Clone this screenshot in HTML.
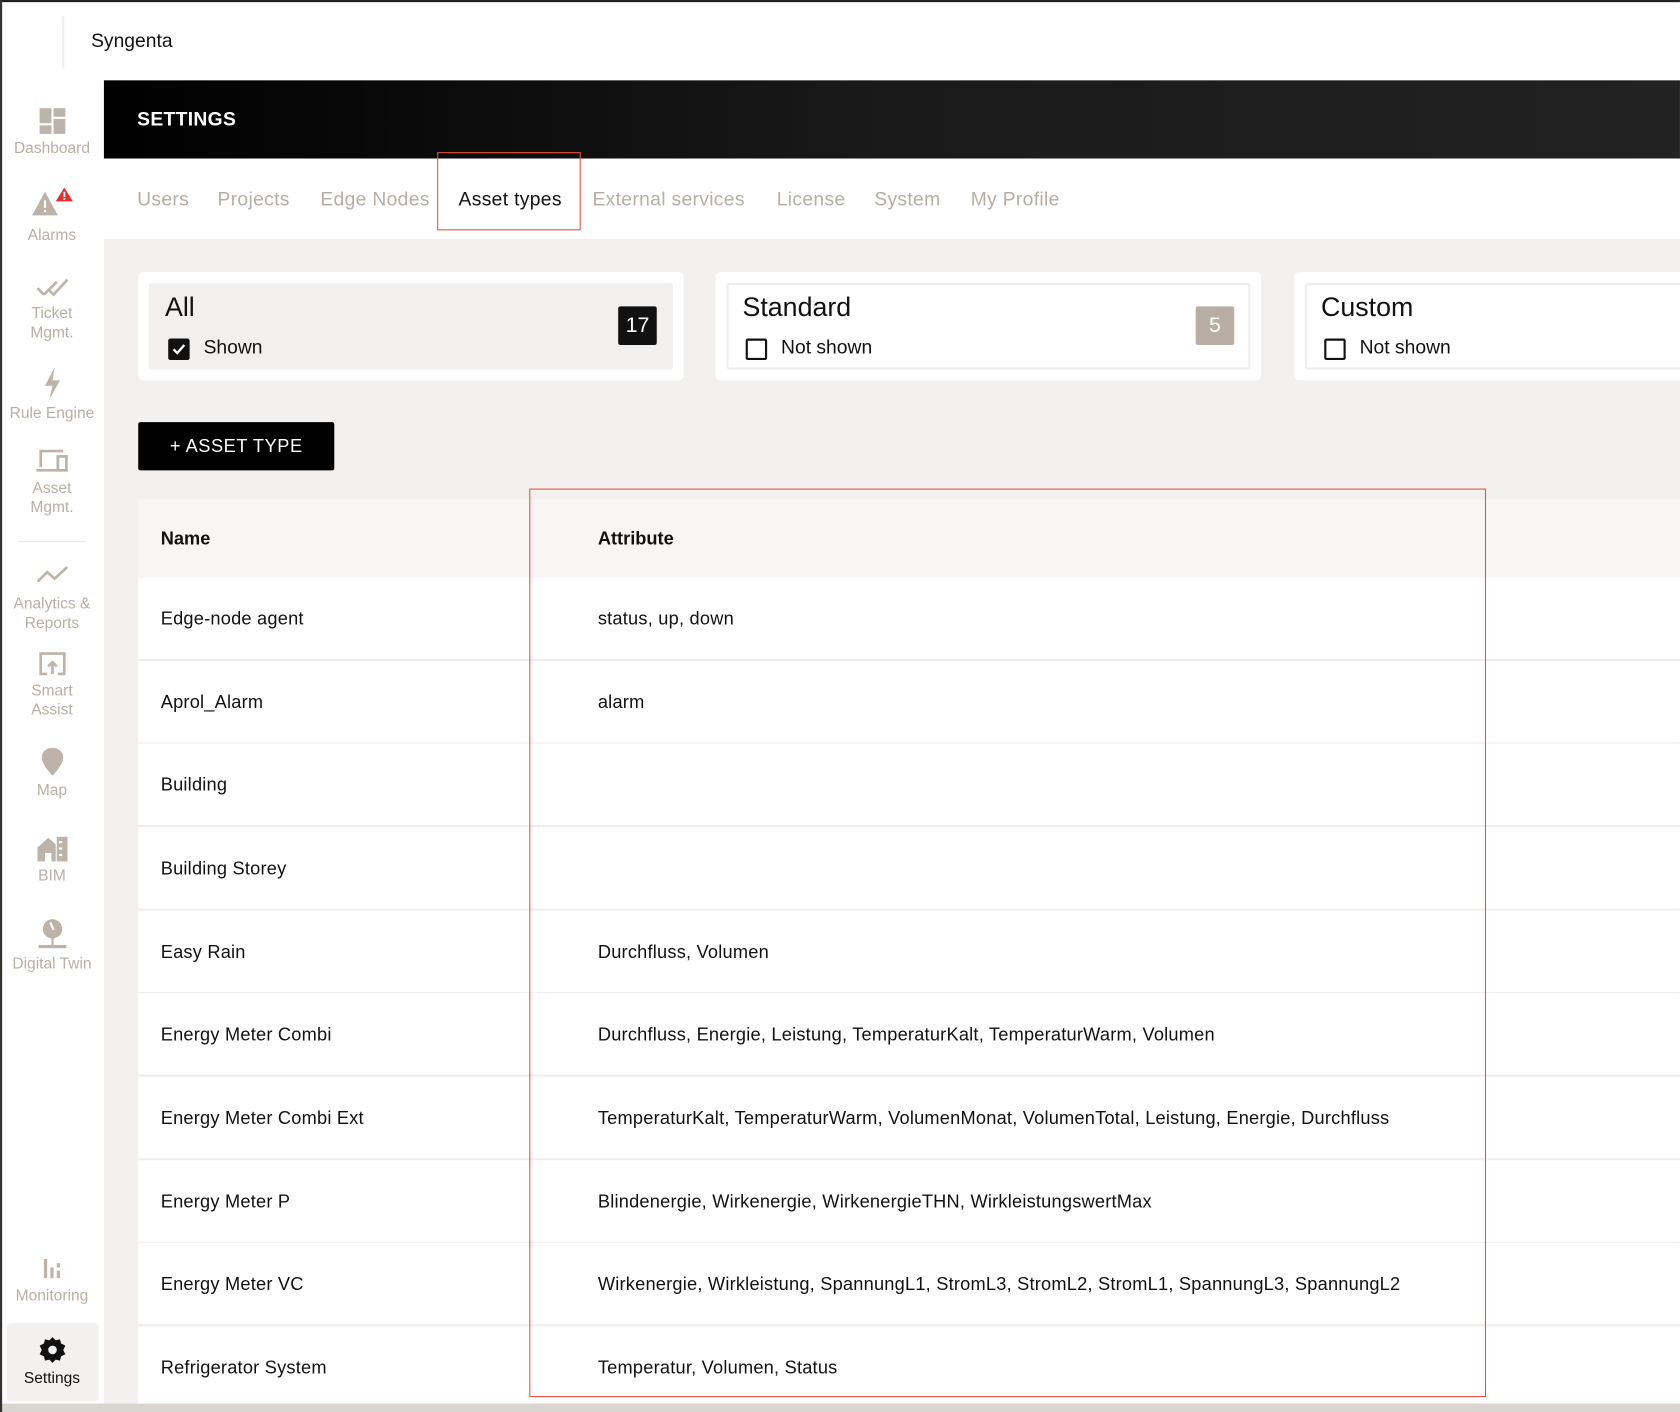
<!DOCTYPE html>
<html><head><meta charset="utf-8"><style>
*{margin:0;padding:0;box-sizing:border-box}
html,body{width:1680px;height:1412px;overflow:hidden;background:#fff;font-family:"Liberation Sans",sans-serif}
#s{position:absolute;left:0;top:0;width:1568px;height:1318px;transform:scale(1.0714);transform-origin:0 0;background:#f2f1ef}
.a{position:absolute}
.side{position:absolute;left:0;top:75px;width:97px;height:1243px;background:#fff}
.si{position:absolute;left:0;width:97px;text-align:center;color:#b9afa5;font-size:14.5px;line-height:18px}
.si svg{display:block;margin:0 auto 4px}
.tab{position:absolute;top:176px;font-size:18px;color:#b8aea5;letter-spacing:.3px}
.card{position:absolute;top:254px;width:509px;height:101px;background:#fff;border-radius:4px}
.inner{position:absolute;left:10px;top:10px;right:10px;bottom:10px;border-radius:3px}
.ttl{position:absolute;left:15px;top:9px;font-size:25px;color:#111;white-space:nowrap}
.cb{position:absolute;left:18px;top:52px;width:20px;height:20px;border:2px solid #111;border-radius:2px}
.cl{position:absolute;left:51px;top:50px;font-size:18px;color:#111;white-space:nowrap}
.badge{position:absolute;top:22px;right:15px;width:36px;height:36px;color:#fff;font-size:20px;text-align:center;line-height:36px;border-radius:2px}
.row{position:absolute;left:129px;width:1439px;height:78px;background:#fff;border-bottom:2px solid #efeeec;font-size:17px;color:#111;letter-spacing:.2px}
.row span{position:absolute;top:29px;white-space:nowrap}
.n{left:21px}.t{left:429px}
</style></head><body><div id="s">
<div class="a" style="left:0;top:0;width:1568px;height:75px;background:#fff;border-top:2px solid #222"></div>
<div class="a" style="left:0;top:0;width:2px;height:1318px;background:#333;z-index:5"></div>
<div class="a" style="left:58px;top:15px;width:2px;height:48px;background:#eee"></div>
<div class="a" style="left:85px;top:28px;font-size:18px;color:#111">Syngenta</div>
<div class="side">
<div class="si" style="top:25px"><svg width="26" height="26" viewBox="0 0 26 26" fill="#bdb3a9"><rect x="1" y="1" width="11" height="14"/><rect x="14" y="1" width="11" height="8"/><rect x="1" y="17" width="11" height="8"/><rect x="14" y="11" width="11" height="14"/></svg><div style="margin-top:4px">Dashboard</div></div>
<div class="si" style="top:100px"><svg width="40" height="28" viewBox="0 0 40 28"><path d="M13 4 L25 26 H1 Z" fill="#bdb3a9"/><rect x="12" y="12" width="2" height="7" fill="#fff"/><rect x="12" y="21" width="2" height="2" fill="#fff"/><path d="M31 0 L39 13 H23 Z" fill="#e8302a"/><rect x="30.3" y="4" width="1.6" height="5" fill="#fff"/><rect x="30.3" y="10" width="1.6" height="1.6" fill="#fff"/></svg><div style="margin-top:8px">Alarms</div></div>
<div class="si" style="top:182px"><svg width="32" height="22" viewBox="0 0 32 22" fill="none" stroke="#bdb3a9" stroke-width="2.5"><path d="M2 12 L8 18 M8 18 L20 6 M13 14 L17 18 L30 4"/></svg><div style="margin-top:5px">Ticket<br>Mgmt.</div></div>
<div class="si" style="top:268px"><svg width="20" height="30" viewBox="0 0 20 30" fill="#bdb3a9"><path d="M12 0 L3 17 H10 L7 30 L17 12 H10 Z"/></svg>Rule Engine</div>
<div class="si" style="top:343px"><svg width="32" height="24" viewBox="0 0 32 24" fill="none" stroke="#bdb3a9" stroke-width="2.5"><path d="M5 18 V3 H26 M1 21 H20"/><rect x="21" y="8" width="8" height="13"/></svg><div style="margin-top:5px">Asset<br>Mgmt.</div></div>
<div class="a" style="left:17px;top:430px;width:63px;height:1px;background:#eeeceb"></div>
<div class="si" style="top:452px"><svg width="32" height="20" viewBox="0 0 32 20" fill="none" stroke="#bdb3a9" stroke-width="2.5" stroke-linecap="round"><path d="M3 15 L11 7 L18 13 L29 3"/></svg><div style="margin-top:8px">Analytics &amp;<br>Reports</div></div>
<div class="si" style="top:533px"><svg width="26" height="24" viewBox="0 0 26 24" fill="none" stroke="#bdb3a9" stroke-width="2.5"><path d="M8 21 H2 V2 H24 V21 H18 M13 21 V10 M9 14 L13 10 L17 14"/></svg><div style="margin-top:4px">Smart<br>Assist</div></div>
<div class="si" style="top:622px"><svg width="22" height="28" viewBox="0 0 22 28" fill="#bdb3a9"><path d="M11 1 C5 1 1 5 1 10 C1 17 11 27 11 27 C11 27 21 17 21 10 C21 5 17 1 11 1 Z M11 7 A3 3 0 1 0 11.1 7 Z"/></svg><div style="margin-top:2px">Map</div></div>
<div class="si" style="top:704px"><svg width="30" height="26" viewBox="0 0 30 26" fill="#bdb3a9"><path d="M1 12 L11 3 L18 9 V25 H14 V17 H8 V25 H1 Z"/><path d="M19 2 H29 V25 H19 Z"/><rect x="21" y="6" width="3" height="2" fill="#fff"/><rect x="21" y="12" width="3" height="2" fill="#fff"/><rect x="21" y="18" width="3" height="2" fill="#fff"/></svg><div style="margin-top:4px">BIM</div></div>
<div class="si" style="top:782px"><svg width="32" height="30" viewBox="0 0 32 30" fill="#bdb3a9"><circle cx="16" cy="10" r="9"/><path d="M14 4 L17 11" stroke="#fff" stroke-width="2"/><rect x="15" y="18" width="2" height="7"/><rect x="3" y="25" width="26" height="3"/></svg><div style="margin-top:3px">Digital Twin</div></div>
<div class="si" style="top:1098px"><svg width="20" height="22" viewBox="0 0 20 22" fill="#bdb3a9"><rect x="2" y="2" width="3" height="18"/><rect x="8" y="10" width="3" height="10"/><rect x="14" y="6" width="3" height="4"/><rect x="14" y="13" width="3" height="7"/></svg><div style="margin-top:6px">Monitoring</div></div>
<div class="a" style="left:6px;top:1160px;width:86px;height:73px;background:#f2f1ef;border-radius:4px"></div>
<div class="si" style="top:1172px;color:#111"><svg width="26" height="26" viewBox="0 0 26 26"><path d="M13 1 L16 4 L20 3 L21 7 L25 9 L23 13 L25 17 L21 19 L20 23 L16 22 L13 25 L10 22 L6 23 L5 19 L1 17 L3 13 L1 9 L5 7 L6 3 L10 4 Z" fill="#111"/><circle cx="13" cy="13" r="4" fill="#f2f1ef"/></svg><div style="margin-top:5px">Settings</div></div>
</div>
<div class="a" style="left:97px;top:75px;width:1471px;height:73px;background:linear-gradient(90deg,#000,#1a1a1a 50%,#222)"></div>
<div class="a" style="left:128px;top:101px;font-size:18px;color:#fff;font-weight:bold;letter-spacing:.3px">SETTINGS</div>
<div class="a" style="left:97px;top:148px;width:1471px;height:75px;background:#fff"></div>
<div class="tab" style="left:128px">Users</div>
<div class="tab" style="left:203px">Projects</div>
<div class="tab" style="left:299px">Edge Nodes</div>
<div class="tab" style="left:428px;color:#111">Asset types</div>
<div class="tab" style="left:553px">External services</div>
<div class="tab" style="left:725px">License</div>
<div class="tab" style="left:816px">System</div>
<div class="tab" style="left:906px">My Profile</div>
<div class="a" style="left:408px;top:142px;width:134px;height:73px;border:1.5px solid #e9513f"></div>
<div class="card" style="left:129px"><div class="inner" style="background:#f1f0ee"></div><div style="position:absolute;left:10px;top:10px"><div class="ttl">All</div><div class="cb" style="background:#111"><svg width="16" height="16" viewBox="0 0 16 16" style="position:absolute;left:0;top:0"><path d="M3 8 L6.5 11.5 L13 4" stroke="#fff" stroke-width="2.2" fill="none"/></svg></div><div class="cl">Shown</div></div><div class="badge" style="background:#111;right:25px;top:32px">17</div></div>
<div class="card" style="left:668px"><div class="inner" style="border:2px solid #efeeec"></div><div style="position:absolute;left:10px;top:10px"><div class="ttl">Standard</div><div class="cb"></div><div class="cl">Not shown</div></div><div class="badge" style="background:#b9aea4;right:25px;top:32px">5</div></div>
<div class="card" style="left:1208px;width:400px"><div class="inner" style="border:2px solid #efeeec"></div><div style="position:absolute;left:10px;top:10px"><div class="ttl">Custom</div><div class="cb"></div><div class="cl">Not shown</div></div></div>
<div class="a" style="left:129px;top:394px;width:183px;height:45px;background:#000;border-radius:2px;color:#fff;font-size:17px;text-align:center;line-height:45px;letter-spacing:.5px">+ ASSET TYPE</div>
<div class="a" style="left:129px;top:466px;width:1439px;height:73px;background:#f7f6f4;font-size:17px;font-weight:bold;color:#111"><span style="position:absolute;left:21px;top:27px">Name</span><span style="position:absolute;left:429px;top:27px">Attribute</span></div>
<div class="row" style="top:539px"><span class="n">Edge-node agent</span><span class="t">status, up, down</span></div>
<div class="row" style="top:617px"><span class="n">Aprol_Alarm</span><span class="t">alarm</span></div>
<div class="row" style="top:694px"><span class="n">Building</span></div>
<div class="row" style="top:772px"><span class="n">Building Storey</span></div>
<div class="row" style="top:850px"><span class="n">Easy Rain</span><span class="t">Durchfluss, Volumen</span></div>
<div class="row" style="top:927px"><span class="n">Energy Meter Combi</span><span class="t">Durchfluss, Energie, Leistung, TemperaturKalt, TemperaturWarm, Volumen</span></div>
<div class="row" style="top:1005px"><span class="n">Energy Meter Combi Ext</span><span class="t">TemperaturKalt, TemperaturWarm, VolumenMonat, VolumenTotal, Leistung, Energie, Durchfluss</span></div>
<div class="row" style="top:1083px"><span class="n">Energy Meter P</span><span class="t">Blindenergie, Wirkenergie, WirkenergieTHN, WirkleistungswertMax</span></div>
<div class="row" style="top:1160px"><span class="n">Energy Meter VC</span><span class="t">Wirkenergie, Wirkleistung, SpannungL1, StromL3, StromL2, StromL1, SpannungL3, SpannungL2</span></div>
<div class="row" style="top:1238px;height:72px;border:none"><span class="n">Refrigerator System</span><span class="t">Temperatur, Volumen, Status</span></div>
<div class="a" style="left:494px;top:456px;width:893px;height:848px;border:1.5px solid #e9513f"></div>
<div class="a" style="left:0;top:1310px;width:1568px;height:8px;background:#d8d5d1"></div>
</div></body></html>
